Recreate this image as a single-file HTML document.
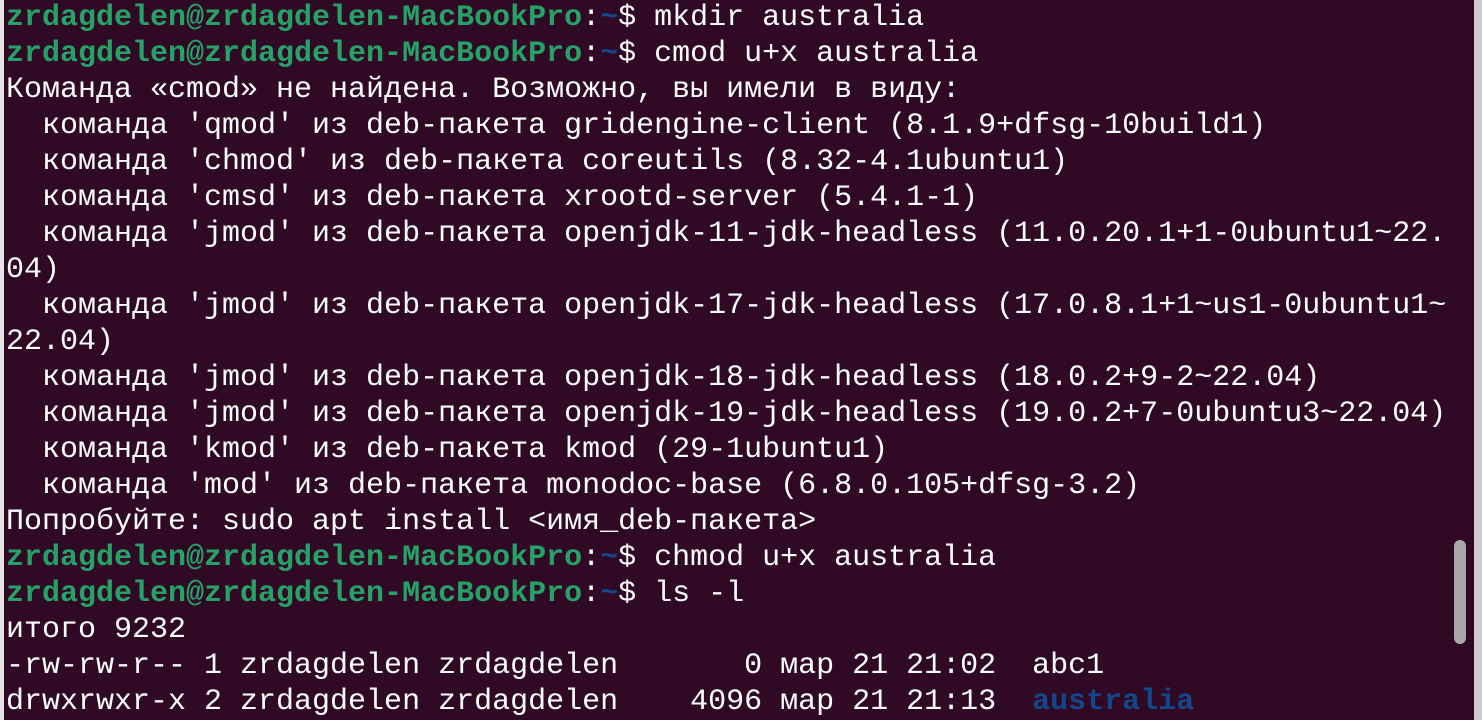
<!DOCTYPE html>
<html><head><meta charset="utf-8"><style>
html,body{margin:0;padding:0;width:1482px;height:720px;overflow:hidden;background:#300a24;}
.l{position:absolute;left:0;top:0;width:4px;height:720px;background:#e8e4e6;}
.r{position:absolute;right:0;top:0;width:8px;height:720px;background:#d0cccc;}
.sb{position:absolute;left:1454px;top:540px;width:12px;height:104px;border-radius:6px;background:#a8a8a8;}
pre{position:absolute;left:6px;top:0px;margin:0;font-family:"Liberation Mono","DejaVu Sans Mono",monospace;font-size:30px;line-height:36px;color:#ffffff;}
.g{color:#26a269;font-weight:bold}
.b{color:#12488b;font-weight:bold}
</style></head><body>
<div class="l"></div><div class="r"></div><div class="sb"></div>
<pre><span class="g">zrdagdelen@zrdagdelen-MacBookPro</span>:<span class="b">~</span>$ mkdir australia
<span class="g">zrdagdelen@zrdagdelen-MacBookPro</span>:<span class="b">~</span>$ cmod u+x australia
Команда «cmod» не найдена. Возможно, вы имели в виду:
  команда 'qmod' из deb-пакета gridengine-client (8.1.9+dfsg-10build1)
  команда 'chmod' из deb-пакета coreutils (8.32-4.1ubuntu1)
  команда 'cmsd' из deb-пакета xrootd-server (5.4.1-1)
  команда 'jmod' из deb-пакета openjdk-11-jdk-headless (11.0.20.1+1-0ubuntu1~22.
04)
  команда 'jmod' из deb-пакета openjdk-17-jdk-headless (17.0.8.1+1~us1-0ubuntu1~
22.04)
  команда 'jmod' из deb-пакета openjdk-18-jdk-headless (18.0.2+9-2~22.04)
  команда 'jmod' из deb-пакета openjdk-19-jdk-headless (19.0.2+7-0ubuntu3~22.04)
  команда 'kmod' из deb-пакета kmod (29-1ubuntu1)
  команда 'mod' из deb-пакета monodoc-base (6.8.0.105+dfsg-3.2)
Попробуйте: sudo apt install &lt;имя_deb-пакета&gt;
<span class="g">zrdagdelen@zrdagdelen-MacBookPro</span>:<span class="b">~</span>$ chmod u+x australia
<span class="g">zrdagdelen@zrdagdelen-MacBookPro</span>:<span class="b">~</span>$ ls -l
итого 9232
-rw-rw-r-- 1 zrdagdelen zrdagdelen       0 мар 21 21:02  abc1
drwxrwxr-x 2 zrdagdelen zrdagdelen    4096 мар 21 21:13  <span class="b">australia</span>
</pre>
</body></html>
